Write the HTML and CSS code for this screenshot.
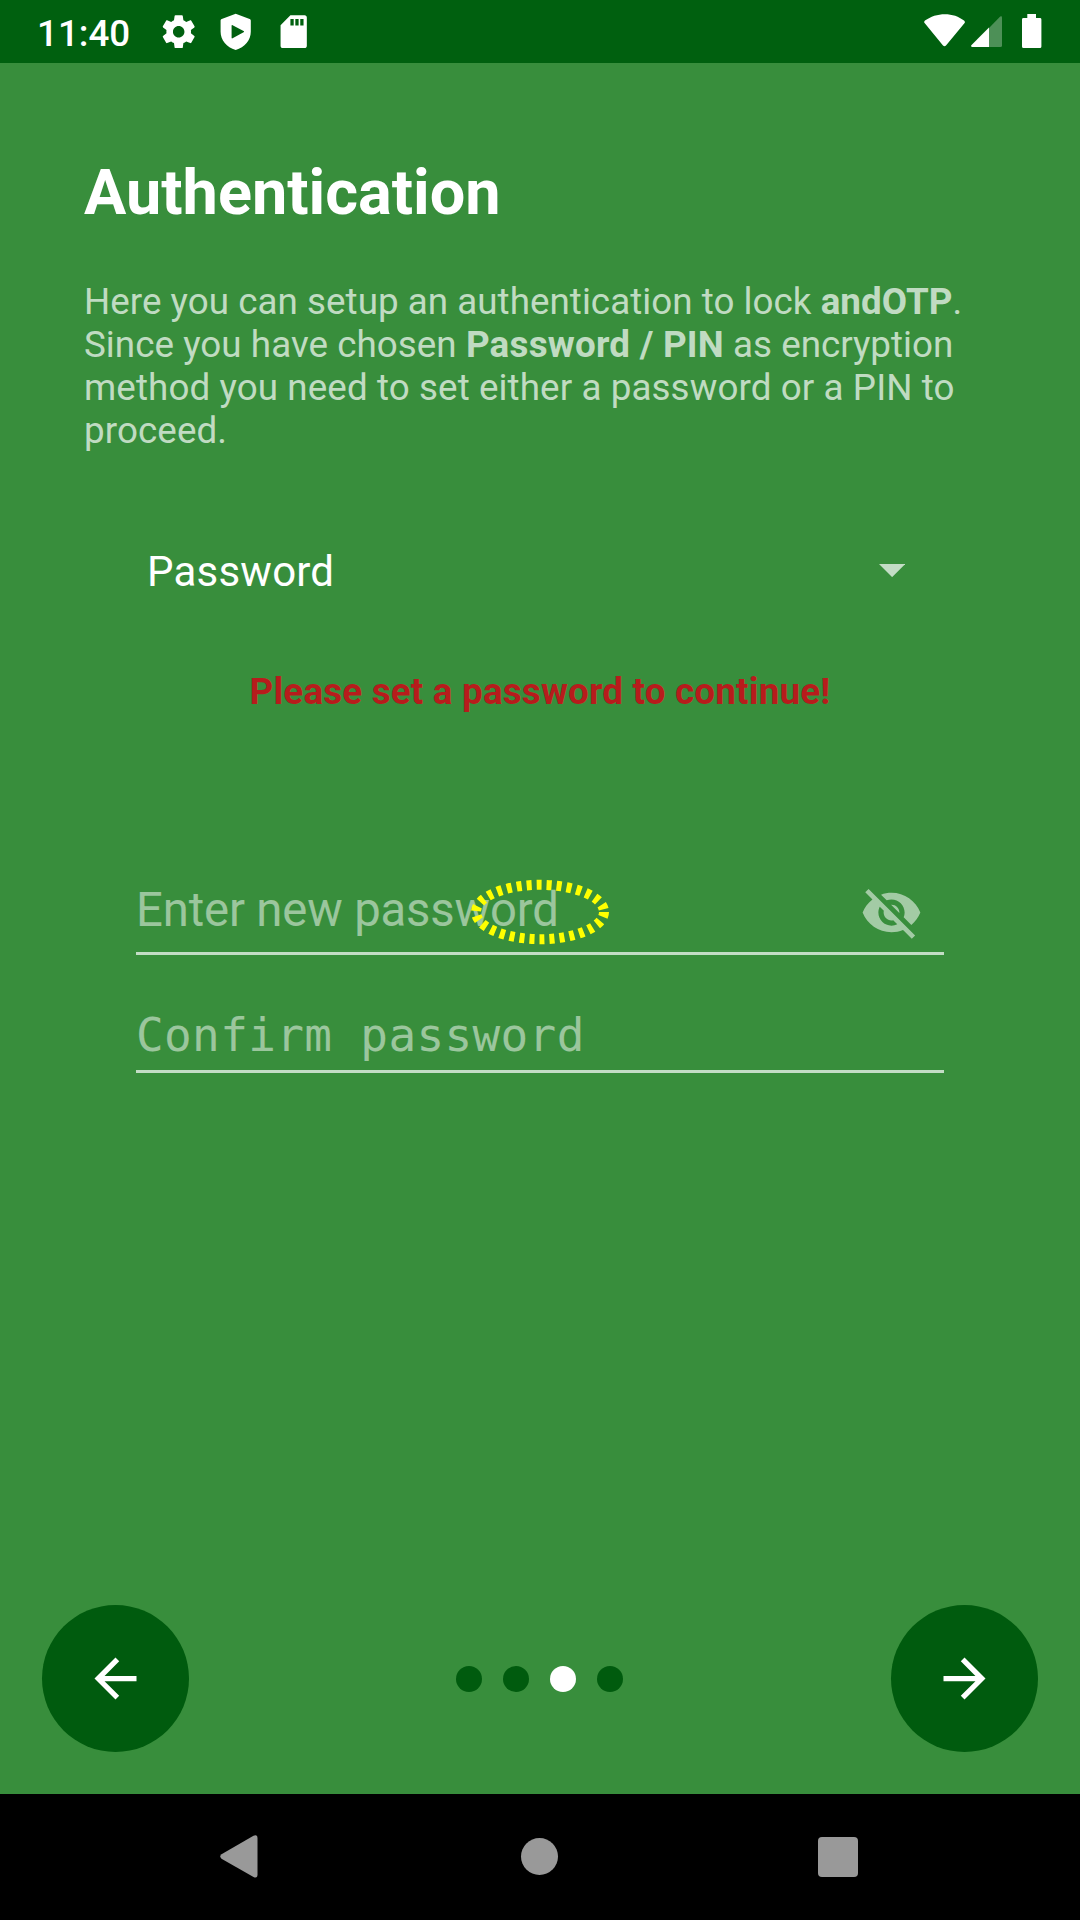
FILE: index.html
```html
<!DOCTYPE html>
<html lang="en">
<head>
<meta charset="utf-8">
<title>andOTP – Authentication</title>
<link rel="stylesheet" href="styles.css">
</head>
<body>
<div class="screen">
  <header class="status-bar">
    <span class="clock">11:40</span>
    <div class="notifications">
      <svg viewBox="0 0 24 24"><path d="M19.43 12.98c.04-.32.07-.64.07-.98s-.03-.66-.07-.98l2.11-1.65c.19-.15.24-.42.12-.64l-2-3.46c-.12-.22-.39-.3-.61-.22l-2.49 1c-.52-.4-1.08-.73-1.69-.98l-.38-2.65C14.46 2.18 14.25 2 14 2h-4c-.25 0-.46.18-.49.42l-.38 2.65c-.61.25-1.17.59-1.69.98l-2.49-1c-.23-.09-.49 0-.61.22l-2 3.46c-.13.22-.07.49.12.64l2.11 1.65c-.04.32-.07.65-.07.98s.03.66.07.98l-2.11 1.65c-.19.15-.24.42-.12.64l2 3.46c.12.22.39.3.61.22l2.49-1c.52.4 1.08.73 1.69.98l.38 2.65c.03.24.24.42.49.42h4c.25 0 .46-.18.49-.42l.38-2.65c.61-.25 1.17-.59 1.69-.98l2.49 1c.23.09.49 0 .61-.22l2-3.46c.12-.22.07-.49-.12-.64l-2.11-1.65zM12 15.5c-1.93 0-3.500-1.570-3.500-3.500s1.570-3.500 3.500-3.500 3.500 1.570 3.500 3.500-1.570 3.500-3.500 3.500z"/></svg>
      <svg viewBox="0 0 24 24"><path fill-rule="evenodd" d="M12 1.100L3.500 4.300C3 4.500 2.800 4.800 2.800 5.300V12C2.800 17 6.500 21.500 12 23.100C17.500 21.500 21.200 17 21.200 12V5.300C21.200 4.800 21 4.500 20.500 4.300ZM9.500 8.300V15.700C9.500 16.100 9.800 16.200 10.100 16L16.800 12.400C17.200 12.200 17.200 11.800 16.800 11.600L10.100 8C9.800 7.800 9.500 7.900 9.500 8.300Z"/></svg>
      <svg viewBox="0 0 24 24"><path d="M18.700 2H10L4 8v12.700c0 .7.600 1.300 1.300 1.300h13.400c.7 0 1.300-.6 1.300-1.300V3.300C20 2.600 19.400 2 18.700 2zM12 8.200h-2v-4h2v4zm3 0h-2v-4h2v4zm3 0h-2v-4h2v4z"/></svg>
    </div>
    <div class="indicators">
      <svg class="wifi" viewBox="0 0 42 34"><path d="M.8 9.200C-.1 8.500 0 7.300 1 6.600C12-2 30-2 40 6.600C41 7.300 41.200 8.500 40.400 9.300L22 31.500Q20.500 33 19 31.500Z"/></svg>
      <svg class="signal" viewBox="0 0 31 32"><path opacity=".3" d="M18 12L29.200.5Q31-.5 31 1.500V29.500Q31 31 29.500 31H18Z"/><path d="M18 11.500V31H1.200Q-.3 30.500.3 29.300Z"/></svg>
      <svg class="battery" viewBox="0 0 20 34"><path d="M5.300 0H14V4H18Q19.400 4 19.400 5.400V32.500Q19.400 34 18 34H1.500Q0 34 0 32.500V5.400Q0 4 1.500 4H5.300Z"/></svg>
    </div>
  </header>

  <main class="slide">
    <h1 class="title">Authentication</h1>
    <p class="description"><span class="line-1">Here you can setup an authentication to lock <b>andOTP</b>.</span><br><span class="line-2">Since you have chosen <b>Password / PIN</b></span> as encryption<br><span class="line-3">method you need to set either a password or a PIN to<br>proceed.</span></p>
    <div class="spinner">
      <span>Password</span>
      <svg class="caret" viewBox="0 0 10 5"><path d="M0 0h10L5 5z"/></svg>
    </div>
    <p class="warning">Please set a password to continue!</p>
    <div class="form">
      <div class="field field-new">
        <span class="hint">Enter new password</span>
        <svg class="toggle" viewBox="0 0 24 24"><path d="M12 7c2.760 0 5 2.240 5 5 0 .65-.13 1.260-.36 1.830l2.920 2.920c1.510-1.260 2.700-2.890 3.430-4.750-1.730-4.390-6-7.500-11-7.500-1.400 0-2.740.25-3.980.7l2.160 2.160C10.740 7.130 11.350 7 12 7zM2 4.270l2.280 2.280.46.46C3.080 8.300 1.780 10.020 1 12c1.730 4.390 6 7.500 11 7.500 1.550 0 3.030-.3 4.380-.84l.42.42L19.730 22 21 20.730 3.270 3 2 4.270zM7.530 9.800l1.550 1.550c-.05.21-.08.43-.08.65 0 1.660 1.340 3 3 3 .22 0 .44-.03.65-.08l1.550 1.550c-.67.33-1.410.53-2.200.53-2.760 0-5-2.240-5-5 0-.79.2-1.530.53-2.200zm4.310-.78l3.150 3.150.02-.16c0-1.660-1.340-3-3-3l-.17.01z"/></svg>
        <svg class="marker" viewBox="0 0 140 66"><ellipse cx="70" cy="33" rx="64" ry="27.200"/></svg>
      </div>
      <div class="field field-confirm">
        <span class="hint mono">Confirm password</span>
      </div>
    </div>
  </main>

  <footer class="pager">
    <div class="fab"><svg viewBox="0 0 24 24"><path d="M20 11H7.830l5.590-5.590L12 4l-8 8 8 8 1.410-1.410L7.830 13H20v-2z"/></svg></div>
    <div class="dots"><i></i><i></i><i class="active"></i><i></i></div>
    <div class="fab"><svg viewBox="0 0 24 24"><path d="M12 4l-1.410 1.410L16.170 11H4v2h12.170l-5.580 5.590L12 20l8-8z"/></svg></div>
  </footer>

  <nav class="nav-bar">
    <svg class="back" viewBox="0 0 38 43"><path d="M1.500 19.300L33.500.8Q37.500-.8 37.500 3.500V39.500Q37.500 43.800 33.500 42L1.500 23.700Q-1 21.500 1.500 19.300Z"/></svg>
    <span class="home"></span>
    <span class="recents"></span>
  </nav>
</div>
</body>
</html>
```
FILE: styles.css
```css
* { box-sizing: border-box; }
body { margin: 0; font-family: Roboto, sans-serif; color: #fff; }
h1, p { margin: 0; }
svg { display: block; fill: currentColor; flex: none; }

.screen {
  width: 1080px;
  height: 1920px;
  display: flex;
  flex-direction: column;
  background: #388e3c;
  overflow: hidden;
}

.status-bar {
  height: 63px;
  display: flex;
  background: #00600f;
}
.clock {
  width: 121.500px;
  margin-left: 37px;
  padding-top: 12px;
  font-size: 36.750px;
  font-weight: 500;
  line-height: 43px;
}
.notifications { display: flex; gap: 18.600px; padding-top: 11.700px; }
.notifications svg { width: 39.400px; height: 39.400px; }
.indicators { display: flex; margin-left: auto; margin-right: 38px; padding-top: 14px; }
.wifi { width: 42px; height: 34px; }
.signal { width: 31px; height: 32px; margin: 2px 20px 0 5px; }
.battery { width: 20px; height: 34px; }

.slide { flex: 1; padding: 0 84px; }
.title {
  margin-top: 93px;
  font-size: 63px;
  font-weight: 700;
  line-height: 74px;
}
.description {
  margin-top: 50px;
  font-size: 36.750px;
  line-height: 43px;
  color: rgba(255, 255, 255, .7);
  white-space: nowrap;
}
.line-1 { letter-spacing: .04px; }
.line-2 { letter-spacing: .05px; }
.line-2 b { letter-spacing: .24px; }
.line-3 { letter-spacing: .1px; }
.spinner {
  display: flex;
  justify-content: space-between;
  align-items: flex-start;
  margin-top: 95px;
  padding: 0 91px 0 63px;
  font-size: 42px;
  line-height: 49px;
  letter-spacing: .22px;
}
.caret { width: 26.250px; height: 13.125px; margin-top: 17px; color: rgba(255, 255, 255, .7); }
.warning {
  margin-top: 74px;
  text-align: center;
  font-size: 36.750px;
  font-weight: 700;
  line-height: 43px;
  letter-spacing: .2px;
  color: #b71c1c;
}
.form { margin: 168px 52px 0; }
.field {
  position: relative;
  display: flex;
  justify-content: space-between;
  border-bottom: 3px solid rgba(255, 255, 255, .7);
}
.field-new { height: 74px; padding-right: 21.500px; }
.field-confirm { height: 118px; padding-top: 52px; }
.hint { font-size: 47.250px; line-height: 56px; color: rgba(255, 255, 255, .5); }
.field-new .hint { padding-top: 1px; letter-spacing: -.14px; }
.hint.mono { font-family: "DejaVu Sans Mono", monospace; font-size: 46px; letter-spacing: .35px; }
.toggle { width: 63px; height: 63px; color: rgba(255, 255, 255, .54); }
.marker { position: absolute; left: 334px; top: -2px; width: 140px; height: 66px; }
.marker ellipse { fill: none; stroke: #ff0; stroke-width: 10; stroke-dasharray: 5; }

.pager {
  display: flex;
  align-items: center;
  justify-content: space-between;
  padding: 0 42px 42px;
}
.fab {
  display: grid;
  place-items: center;
  width: 147px;
  height: 147px;
  border-radius: 50%;
  background: #005b0e;
}
.fab svg { width: 63px; height: 63px; }
.dots { display: flex; gap: 21px; margin-right: 1px; }
.dots i { width: 26px; height: 26px; border-radius: 50%; background: #005b0e; }
.dots .active { background: #fff; }

.nav-bar {
  height: 126px;
  display: flex;
  align-items: center;
  justify-content: space-between;
  padding: 0 222px 1px 219.500px;
  background: #000;
  color: #999;
}
.back { width: 38px; height: 43px; }
.home { width: 37px; height: 37px; margin-left: 3px; border-radius: 50%; background: #999; }
.recents { width: 40px; height: 40px; border-radius: 4px; background: #999; }
```
